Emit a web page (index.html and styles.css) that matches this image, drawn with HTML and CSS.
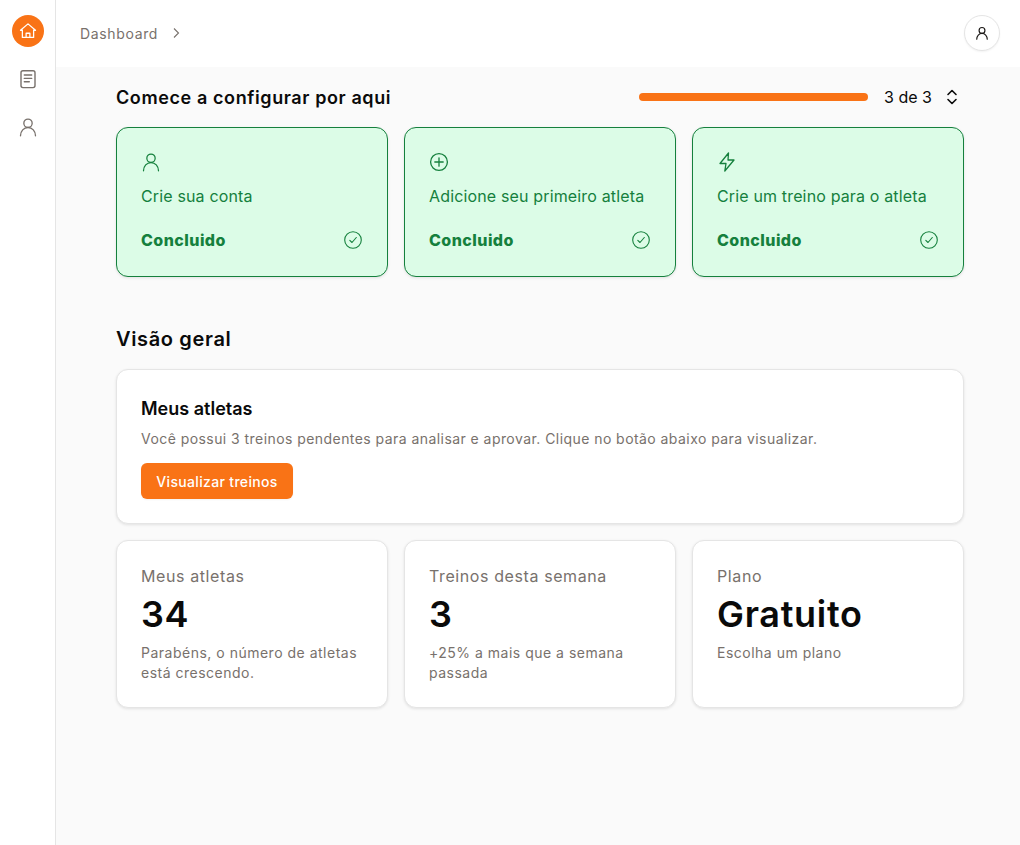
FILE: index.html
```html
<!DOCTYPE html>
<html lang="pt-BR">
<head>
  <meta charset="UTF-8" />
  <title>Dashboard</title>
  <link rel="stylesheet" href="styles.css">
</head>
<body>
  <aside class="sidebar">
    <a class="nav-item active">
      <svg width="18" height="18" viewBox="0 0 24 24" fill="none" stroke="currentColor" stroke-width="1.700" stroke-linejoin="round" stroke-linecap="round"><path d="M2 11 12 2.500 22 11h-2.500v9.500h-15V11z"/><path d="M9.500 20.500v-5.500h5v5.500"/></svg>
    </a>
    <a class="nav-item nav-doc">
      <svg width="20" height="20" viewBox="0 0 20 20" fill="none" stroke="currentColor" stroke-width="1.400" stroke-linecap="round"><rect x="3" y="1.800" width="14" height="16.800" rx="2"/><path d="M6.300 6h7.400M6.300 9.400h7.400M6.300 12.800h5"/></svg>
    </a>
    <a class="nav-item">
      <svg width="20" height="20" viewBox="0 0 24 24" fill="none" stroke="currentColor" stroke-width="1.600" stroke-linecap="round"><circle cx="12" cy="7.500" r="5"/><path d="M3 22.500c0-5.500 4-9.900 9-9.900s9 4.400 9 9.900"/></svg>
    </a>
  </aside>

  <div class="page">
    <header class="topbar">
      <nav class="crumbs">
        <span>Dashboard</span>
        <svg width="16" height="16" viewBox="0 0 16 16" fill="none" stroke="currentColor" stroke-width="1.100"><path d="m6 3.500 4.500 4.500L6 12.500"/></svg>
      </nav>
      <button class="avatar">
        <svg width="14" height="14" viewBox="0 0 24 24" fill="none" stroke="currentColor" stroke-width="2" stroke-linecap="round"><circle cx="12" cy="7.500" r="5"/><path d="M3 22.500c0-5.500 4-9.900 9-9.900s9 4.400 9 9.900"/></svg>
      </button>
    </header>

    <main class="content">
      <section class="setup-head">
        <h2 class="setup-title">Comece a configurar por aqui</h2>
        <div class="progress-wrap">
          <div class="progress"></div>
          <span class="progress-label">3 de 3</span>
          <svg class="progress-toggle" width="16" height="20" viewBox="0 0 16 20" fill="none" stroke="currentColor" stroke-width="1.600" stroke-linecap="round" stroke-linejoin="round"><path d="m4 7.500 4-4 4 4M4 12.500l4 4 4-4"/></svg>
        </div>
      </section>

      <section class="grid">
        <div class="step">
          <svg class="step-icon" width="20" height="20" viewBox="0 0 24 24" fill="none" stroke="currentColor" stroke-width="1.500" stroke-linecap="round"><circle cx="12" cy="7.500" r="5"/><path d="M3 22.500c0-5.500 4-9.900 9-9.900s9 4.400 9 9.900"/></svg>
          <p class="step-text">Crie sua conta</p>
          <div class="step-foot">
            <strong>Concluido</strong>
            <svg width="18" height="18" viewBox="0 0 18 18" fill="none" stroke="currentColor" stroke-width="1.100" stroke-linecap="round" stroke-linejoin="round"><circle cx="9" cy="9" r="8.300"/><path d="m5.800 9.300 2.200 2.200 4.300-5"/></svg>
          </div>
        </div>
        <div class="step">
          <svg class="step-icon" width="20" height="20" viewBox="0 0 20 20" fill="none" stroke="currentColor" stroke-width="1.300" stroke-linecap="round"><circle cx="10" cy="10" r="8.400"/><path d="M10 5.800v8.400M5.800 10h8.400"/></svg>
          <p class="step-text">Adicione seu primeiro atleta</p>
          <div class="step-foot">
            <strong>Concluido</strong>
            <svg width="18" height="18" viewBox="0 0 18 18" fill="none" stroke="currentColor" stroke-width="1.100" stroke-linecap="round" stroke-linejoin="round"><circle cx="9" cy="9" r="8.300"/><path d="m5.800 9.300 2.200 2.200 4.300-5"/></svg>
          </div>
        </div>
        <div class="step">
          <svg class="step-icon" width="20" height="20" viewBox="0 0 20 20" fill="none" stroke="currentColor" stroke-width="1.300" stroke-linejoin="round"><path d="M11.500 1 3 11.500h6L7.800 19 17 8h-6z"/></svg>
          <p class="step-text">Crie um treino para o atleta</p>
          <div class="step-foot">
            <strong>Concluido</strong>
            <svg width="18" height="18" viewBox="0 0 18 18" fill="none" stroke="currentColor" stroke-width="1.100" stroke-linecap="round" stroke-linejoin="round"><circle cx="9" cy="9" r="8.300"/><path d="m5.800 9.300 2.200 2.200 4.300-5"/></svg>
          </div>
        </div>
      </section>

      <h2 class="overview-title">Visão geral</h2>

      <section class="card athletes">
        <h3>Meus atletas</h3>
        <p>Você possui 3 treinos pendentes para analisar e aprovar. Clique no botão abaixo para visualizar.</p>
        <button class="btn">Visualizar treinos</button>
      </section>

      <section class="grid">
        <div class="card stat">
          <span class="stat-label">Meus atletas</span>
          <div class="stat-value">34</div>
          <p>Parabéns, o número de atletas está crescendo.</p>
        </div>
        <div class="card stat">
          <span class="stat-label">Treinos desta semana</span>
          <div class="stat-value">3</div>
          <p>+25% a mais que a semana passada</p>
        </div>
        <div class="card stat">
          <span class="stat-label">Plano</span>
          <div class="stat-value">Gratuito</div>
          <p>Escolha um plano</p>
        </div>
      </section>
    </main>
  </div>
</body>
</html>
```

FILE: styles.css
```css
* {
  box-sizing: border-box;
}

body {
  margin: 0;
  height: 845px;
  display: flex;
  font-family: Inter, "Liberation Sans", sans-serif;
  background: #fafafa;
  color: #0a0a0a;
  overflow: hidden;
}

h2, h3, p {
  margin: 0;
}

.sidebar {
  width: 56px;
  background: #fff;
  border-right: 1px solid #e5e5e5;
  display: flex;
  flex-direction: column;
  align-items: center;
  padding-top: 15px;
  gap: 16px;
}

.nav-item {
  width: 32px;
  height: 32px;
  border-radius: 50%;
  display: flex;
  align-items: center;
  justify-content: center;
  color: #78716c;
}

.nav-item.active {
  background: #f97316;
  color: #fff;
}

.page {
  flex: 1;
}

.topbar {
  height: 67px;
  background: #fff;
  display: flex;
  align-items: center;
  justify-content: space-between;
  padding: 0 20px 1px 24px;
}

.crumbs {
  display: flex;
  align-items: center;
  gap: 10px;
  font-size: 14px;
  letter-spacing: 0.65px;
  color: #78716c;
}

.avatar {
  width: 36px;
  height: 36px;
  padding: 0;
  border: 1px solid #e5e5e5;
  border-radius: 50%;
  background: #fff;
  color: #1c1917;
  display: flex;
  align-items: center;
  justify-content: center;
  box-shadow: 0 1px 2px rgba(0, 0, 0, 0.05);
}

.content {
  padding: 0 56px 0 60px;
}

.setup-head {
  height: 60px;
  display: flex;
  align-items: center;
  justify-content: space-between;
}

.setup-title {
  font-size: 18px;
  font-weight: 600;
  letter-spacing: 0.6px;
}

.progress-wrap {
  display: flex;
  align-items: center;
  gap: 16px;
  padding-right: 4px;
}

.progress {
  width: 229px;
  height: 8px;
  border-radius: 4px;
  background: #f97316;
}

.progress-label {
  font-size: 16px;
}

.progress-toggle {
  margin-left: -4px;
}

.grid {
  display: grid;
  grid-template-columns: repeat(3, 272px);
  gap: 16px;
}

.step {
  height: 150px;
  padding: 24px;
  background: #dcfce7;
  border: 1px solid #15803d;
  border-radius: 12px;
  color: #15803d;
  box-shadow: 0 1px 3px rgba(0, 0, 0, 0.1);
}

.step-icon {
  display: block;
}

.step-text {
  margin-top: 12px;
  font-size: 16px;
  line-height: 24px;
  letter-spacing: 0.15px;
}

.step-foot {
  margin-top: 22px;
  display: flex;
  align-items: center;
  justify-content: space-between;
}

.step-foot strong {
  font-size: 16px;
  font-weight: 800;
  letter-spacing: 0.45px;
}

.step-foot svg {
  margin-right: 1px;
}

.overview-title {
  margin-top: 47px;
  font-size: 20px;
  line-height: 30px;
  font-weight: 600;
  letter-spacing: 0.65px;
}

.card {
  background: #fff;
  border: 1px solid #e5e5e5;
  border-radius: 12px;
  box-shadow: 0 1px 3px rgba(0, 0, 0, 0.1);
  padding: 24px;
}

.athletes {
  height: 155px;
  margin: 15px 0 16px;
}

.athletes h3 {
  font-size: 18px;
  line-height: 28px;
  font-weight: 600;
  padding-top: 1px;
}

.athletes p {
  font-size: 14px;
  line-height: 20px;
  margin-top: 6px;
  letter-spacing: 0.44px;
  color: #78716c;
}

.btn {
  margin-top: 14px;
  width: 152px;
  height: 36px;
  border: none;
  border-radius: 6px;
  background: #f97316;
  color: #fff;
  font-family: inherit;
  font-size: 14px;
  font-weight: 500;
  letter-spacing: 0.33px;
  box-shadow: 0 1px 2px rgba(0, 0, 0, 0.05);
}

.stat {
  height: 168px;
}

.stat-label {
  display: block;
  font-size: 16px;
  line-height: 22px;
  letter-spacing: 0.6px;
  color: #78716c;
}

.stat-value {
  font-size: 36px;
  line-height: 40px;
  font-weight: 600;
  letter-spacing: 0.7px;
  margin-top: 7px;
}

.stat p {
  margin-top: 9px;
  font-size: 14px;
  line-height: 20px;
  letter-spacing: 0.5px;
  color: #78716c;
}
```
